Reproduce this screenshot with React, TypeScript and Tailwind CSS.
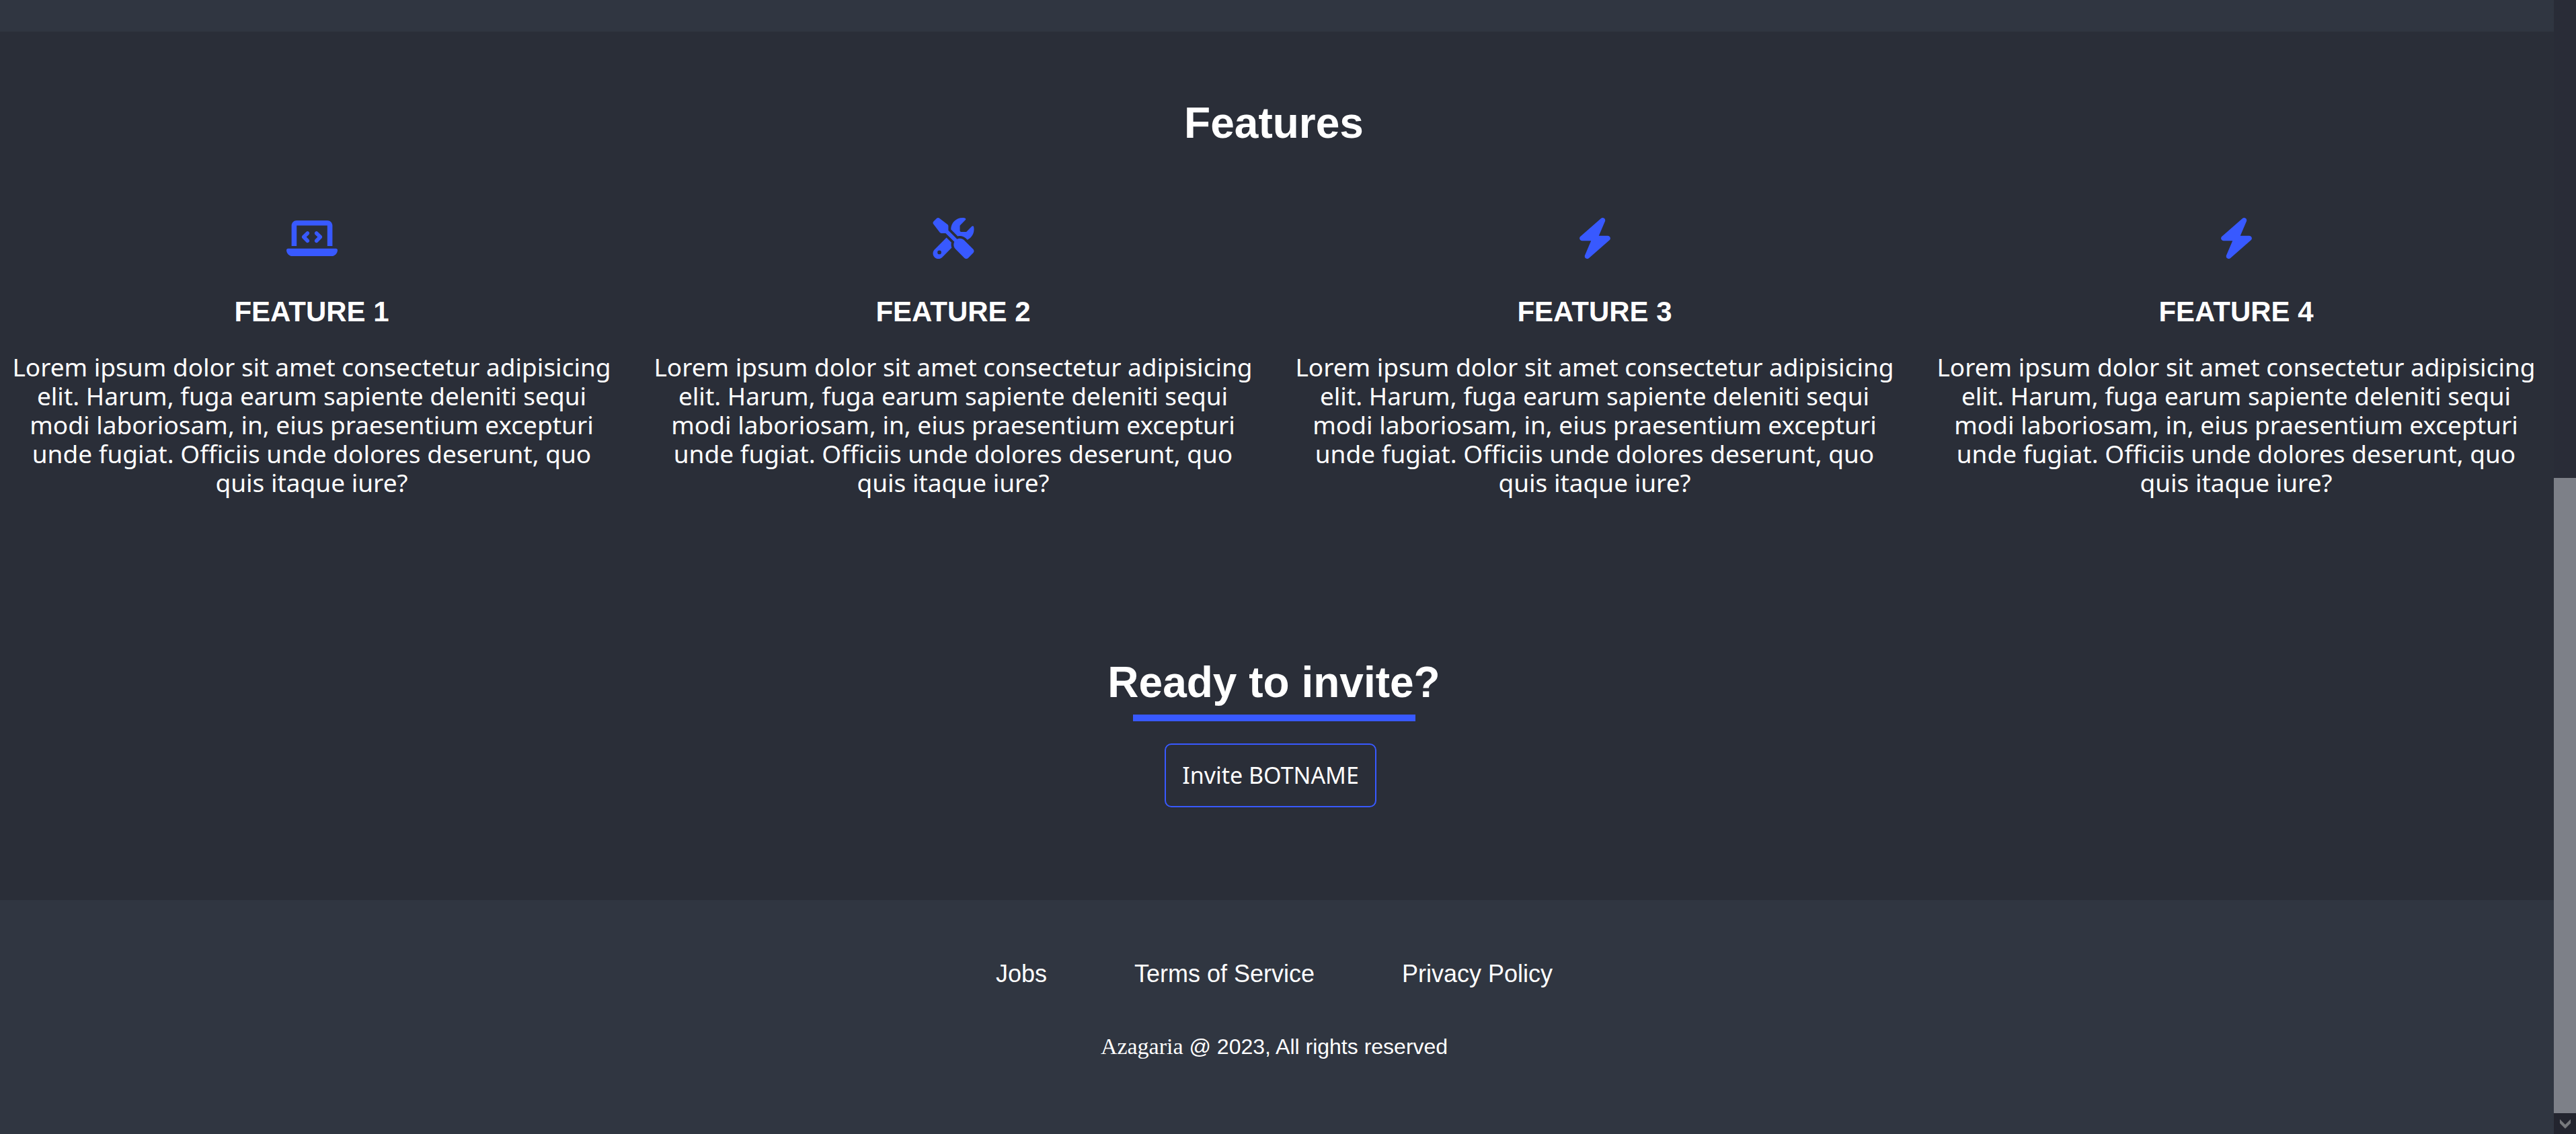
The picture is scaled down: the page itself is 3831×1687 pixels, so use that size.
import { FaBolt, FaLaptopCode, FaScrewdriverWrench } from "react-icons/fa6";

const features = [
  { title: "Feature 1", Icon: FaLaptopCode },
  { title: "Feature 2", Icon: FaScrewdriverWrench },
  { title: "Feature 3", Icon: FaBolt },
  { title: "Feature 4", Icon: FaBolt },
];

const links = ["Jobs", "Terms of Service", "Privacy Policy"];

function Features() {
  return (
    <section className="pt-[100px]">
      <h2 className="text-center text-[64px] leading-[72px] font-bold">Features</h2>
      <div className="mt-[105px] grid grid-cols-4 gap-[27px]">
        {features.map(({ title, Icon }) => (
          <article key={title} className="flex flex-col items-center text-center">
            <Icon className="h-[61px] w-[76px] text-[#3859ff]" />
            <h3 className="mt-[55px] text-[42px] leading-[48px] font-bold uppercase">{title}</h3>
            <p className="mt-[36px] px-3 font-['Noto_Sans',sans-serif] text-[37px] leading-[43px]">
              Lorem ipsum dolor sit amet consectetur adipisicing elit. Harum, fuga earum sapiente deleniti sequi modi
              laboriosam, in, eius praesentium excepturi unde fugiat. Officiis unde dolores deserunt, quo quis itaque
              iure?
            </p>
          </article>
        ))}
      </div>
    </section>
  );
}

function Invite() {
  return (
    <section className="flex flex-col items-center pt-[240px] pb-[138px]">
      <h2 className="text-[64px] leading-[72px] font-bold">Ready to invite?</h2>
      <div className="mt-3 h-[10px] w-[420px] bg-[#3859ff]" />
      <button
        type="button"
        className="mt-[33px] mr-[10px] rounded-[10px] border-2 border-[#3859ff] px-6 py-[21px] font-['Noto_Sans',sans-serif] text-[34px] leading-[49px]"
      >
        Invite BOTNAME
      </button>
    </section>
  );
}

function Footer() {
  return (
    <footer className="grow bg-[#303641] pt-[90px] pr-2 text-center">
      <nav className="flex justify-center gap-[130px] text-[36px] leading-[40px]">
        {links.map((label) => (
          <a key={label} href="#">
            {label}
          </a>
        ))}
      </nav>
      <p className="mt-[70px] text-[32px] leading-[36px]">
        <span className="font-['Liberation_Serif',serif] text-[34px]">Azagaria</span> @ 2023, All rights reserved
      </p>
    </footer>
  );
}

function ScrollBar() {
  return (
    <div aria-hidden="true" className="flex w-[33px] shrink-0 flex-col bg-[#292c37]">
      <div className="h-[711px]" />
      <div className="grow bg-[#7d8088]" />
      <div className="flex h-[31px] items-center justify-center bg-[#23252f]">
        <svg viewBox="0 0 16 14" className="h-[14px] w-4" fill="#77797d">
          <path d="M0 0 8 8 16 0V6L8 14 0 6Z" />
        </svg>
      </div>
    </div>
  );
}

export default function App() {
  return (
    <div className="flex min-h-screen bg-[#2a2e38] font-['Liberation_Sans',sans-serif] text-white">
      <div className="flex min-w-0 grow flex-col">
        <div className="h-[47px] bg-[#303641]" />
        <main className="pr-[9px]">
          <Features />
          <Invite />
        </main>
        <Footer />
      </div>
      <ScrollBar />
    </div>
  );
}
